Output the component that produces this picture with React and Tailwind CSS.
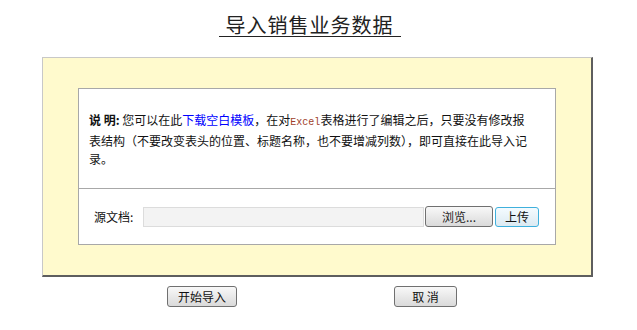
import React from 'react';

const FONT = "font-['Noto_Sans_CJK_SC','Liberation_Sans',sans-serif]";
const BTN =
  'h-[21px] rounded-[3px] border border-[#707070] bg-gradient-to-b from-[#f8f8f8] to-[#dadada] text-[12px] leading-none text-[#111]';

function App() {
  return (
    <div className={`w-[637px] h-[330px] bg-white ${FONT}`}>
      {/* 标题 */}
      <div className="flex justify-center pt-[13px] pl-[-8px]">
        <h1 className="mr-[18px] border-b border-[#222] px-[7px] text-[20px] leading-[23px] tracking-[1px] text-[#222] font-normal">
          导入销售业务数据
        </h1>
      </div>

      {/* 外框 */}
      <div className="ml-[42px] mt-[20px] w-[551px] border-t border-l border-r-2 border-b-2 border-t-[#c8c8c8] border-l-[#c8c8c8] border-r-[#5e5e5e] border-b-[#5e5e5e] bg-[#fffacd] px-[35px] pt-[30px] pb-[30px]">
        <div className="w-[478px] border border-[#a8a8a8] bg-white">
          <div className="h-[100px] border-b border-[#a8a8a8] px-[10px] pt-[22px] text-[12px] leading-[18px] text-[#111]">
            <b className="font-bold">说 明:</b>&nbsp;您可以在此
            <a className="text-[#0000ff]">下载空白模板</a>，在对
            <span className="font-['Liberation_Mono',monospace] text-[10px] text-[#a0402a]">
              Excel
            </span>
            表格进行了编辑之后，只要没有修改报
            <br />
            表结构（不要改变表头的位置、标题名称，也不要增减列数），即可直接在此导入记
            <br />
            录。
          </div>
          <div className="flex h-[55px] items-center pl-[15px] text-[12px] text-[#111]">
            <span className="w-[49px]">源文档:</span>
            <div className="h-[20px] w-[281px] border border-[#dcdcdc] bg-[#f3f3f3]"></div>
            <button className={`${BTN} ml-[1px] w-[68px] text-[#222]`}>浏览...</button>
            <button className="ml-[2px] h-[20px] w-[44px] rounded-[3px] border border-[#3fb0dc] bg-gradient-to-b from-[#f4fbff] to-[#dceaf2] text-[12px] leading-none text-[#111]">
              上传
            </button>
          </div>
        </div>
      </div>

      {/* 按钮 */}
      <div className="mt-[9px] flex">
        <button className={`${BTN} ml-[167px] w-[70px]`}>开始导入</button>
        <button className={`${BTN} ml-[157px] w-[63px]`}>取&nbsp;消</button>
      </div>
    </div>
  );
}

export default App;
